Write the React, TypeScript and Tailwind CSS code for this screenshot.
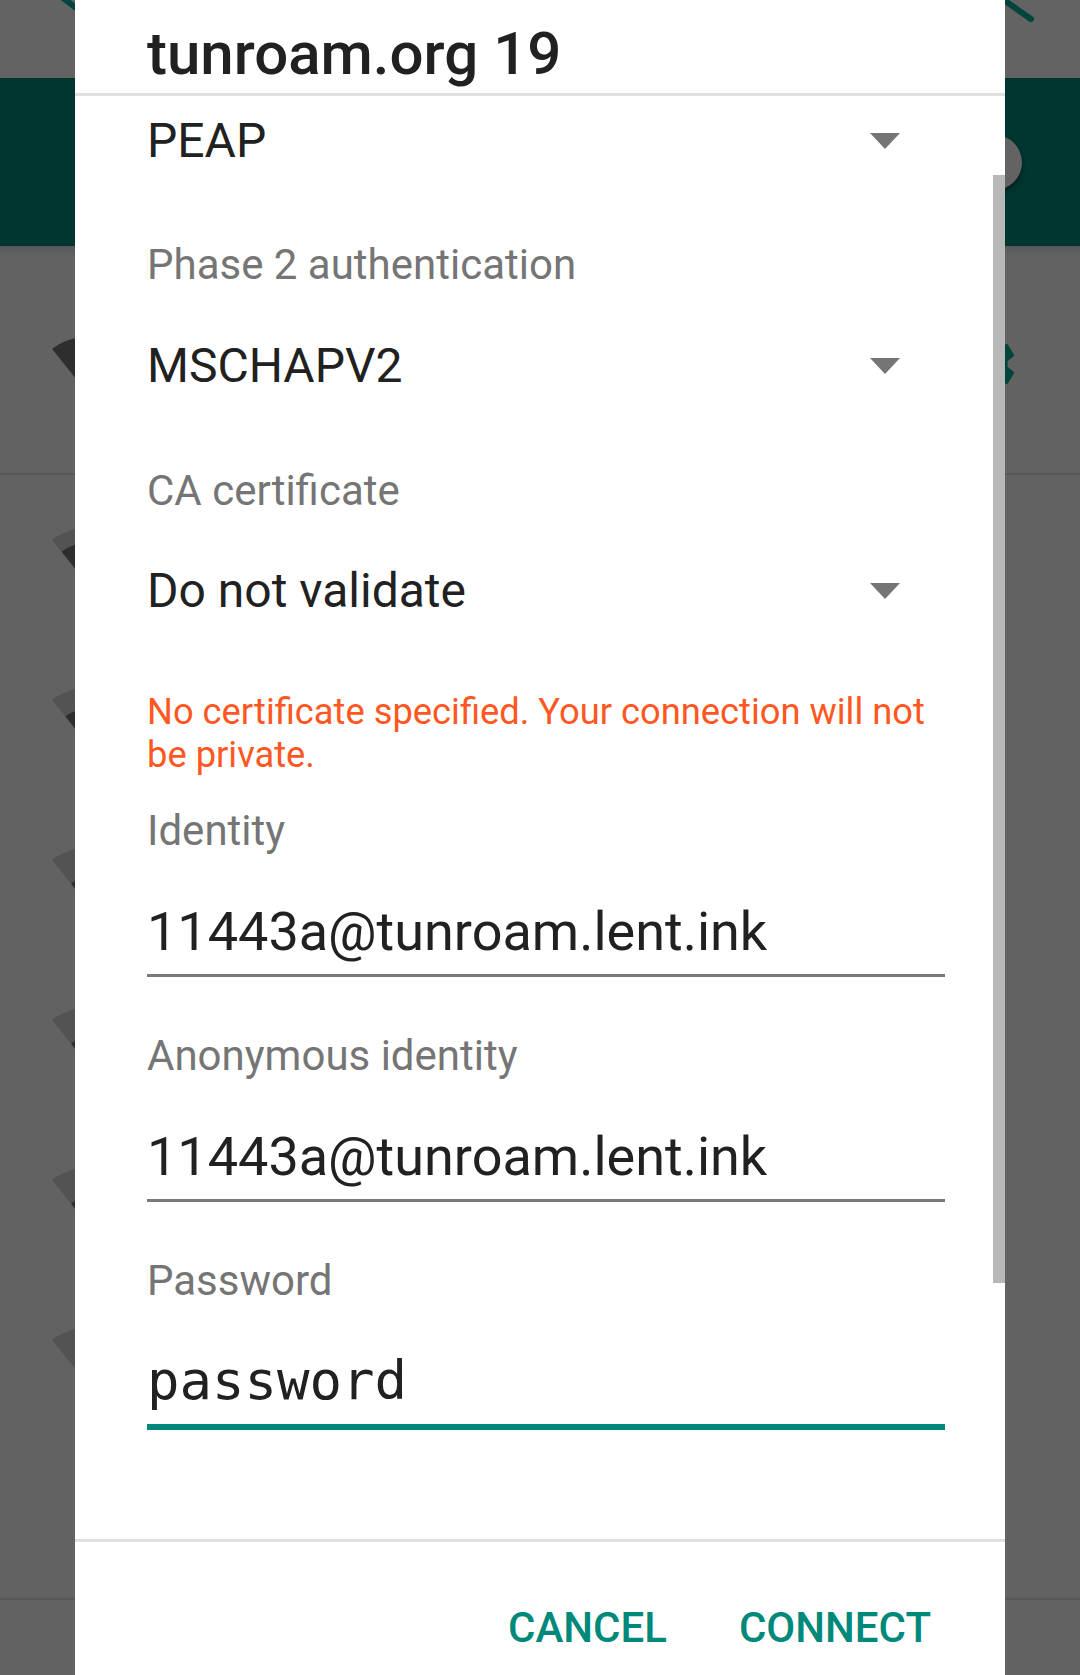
import React from "react";

const FAN =
  "M12.01 21.49L23.64 7c-.45-.34-4.93-4-11.64-4C5.28 3 .81 6.66.36 7l11.63 14.49.01.01.01-.01z";
const BARS: Record<number, string> = {
  4: FAN,
  3: "M3.53 10.95l8.46 10.54.01.01.01-.01 8.46-10.54C20.04 10.62 16.81 8 12 8c-4.81 0-8.04 2.62-8.47 2.95z",
  2: "M4.79 12.52l7.2 8.98H12l.01-.01 7.2-8.98C18.85 12.24 16.1 10 12 10s-6.85 2.24-7.21 2.52z",
  1: "M6.67 14.86L12 21.49v.01l.01-.01 5.33-6.63C17.06 14.65 15.03 13 12 13s-5.06 1.65-5.33 1.86z",
};

function WifiIcon({ level }: { level: number }) {
  return (
    <svg width="72" height="72" viewBox="0 0 24 24" className="shrink-0">
      <path d={FAN} fill="#535353" />
      {level > 0 && <path d={BARS[level]} fill="#2e2e2e" />}
    </svg>
  );
}

function GearIcon() {
  return (
    <svg width="72" height="72" viewBox="0 0 24 24" className="shrink-0">
      <path
        fill="#00443c"
        d="M19.14 12.94c.04-.3.06-.61.06-.94 0-.32-.02-.64-.07-.94l2.03-1.58c.18-.14.23-.41.12-.61l-1.92-3.32c-.12-.22-.37-.29-.59-.22l-2.39.96c-.5-.38-1.03-.7-1.62-.94l-.36-2.54c-.04-.24-.24-.41-.48-.41h-3.84c-.24 0-.43.17-.47.41l-.36 2.54c-.59.24-1.130.57-1.62.94l-2.39-.96c-.22-.08-.47 0-.59.22L2.74 8.87c-.12.21-.08.47.12.61l2.03 1.58c-.05.3-.09.63-.09.94s.02.64.07.94l-2.03 1.58c-.18.14-.23.41-.12.61l1.92 3.32c.12.22.37.29.59.22l2.39-.96c.5.38 1.03.7 1.62.94l.36 2.54c.05.24.24.41.48.41h3.84c.24 0 .44-.17.47-.41l.36-2.54c.59-.24 1.13-.56 1.62-.94l2.39.96c.22.08.47 0 .59-.22l1.92-3.32c.12-.22.07-.47-.12-.61l-2.01-1.58zM12 15.6c-1.98 0-3.6-1.62-3.6-3.6s1.62-3.6 3.6-3.6 3.6 1.62 3.6 3.6-1.62 3.6-3.6 3.6z"
      />
    </svg>
  );
}

function Caret() {
  return (
    <svg width="30" height="16" viewBox="0 0 30 16" className="mr-[45px] shrink-0">
      <polygon points="0,0 30,0 15,16" fill="#757575" />
    </svg>
  );
}

function Spinner({ value, mt }: { value: string; mt: string }) {
  return (
    <div className={`flex h-[56px] items-center justify-between ${mt}`}>
      <span className="text-[48px] leading-[56px] text-[#212121]">{value}</span>
      <Caret />
    </div>
  );
}

function Label({ text, mt }: { text: string; mt: string }) {
  return <div className={`text-[42px] leading-[49px] text-[#757575] ${mt}`}>{text}</div>;
}

const wifiRows = [3, 2, 1, 1, 1, 0];

export default function App() {
  return (
    <div className="relative h-[1675px] w-[1080px] overflow-hidden bg-[#626262] font-['Roboto',sans-serif]">
      {/* dimmed Wi-Fi settings screen behind the dialog */}
      <div className="relative h-[78px] bg-[#636363]">
        <svg className="absolute left-0 top-0" width="80" height="78">
          <line x1="58" y1="-6" x2="76" y2="8" stroke="#00443c" strokeWidth="6" strokeLinecap="round" />
        </svg>
        <svg className="absolute right-0 top-0" width="80" height="78">
          <line x1="-2" y1="-4" x2="31" y2="19" stroke="#00443c" strokeWidth="6" strokeLinecap="round" />
        </svg>
      </div>
      <div className="flex h-[168px] items-center justify-end bg-[#003530] pr-[58px]">
        <div className="h-[55px] w-[55px] rounded-full bg-[#636363] shadow-[0_3px_4px_rgba(0,0,0,0.45)]" />
      </div>
      <div className="h-[9px] bg-gradient-to-b from-[#565656] to-[#626262]" />
      <div className="flex h-[220px] items-center border-b-2 border-[#585858] pl-[51px] pr-[58px]">
        <svg width="72" height="72" viewBox="0 0 24 24" className="shrink-0">
          <path d={FAN} fill="#2e2e2e" />
        </svg>
        <div className="ml-auto">
          <GearIcon />
        </div>
      </div>
      {wifiRows.map((lvl, i) => (
        <div key={i} className="flex h-[160px] items-center pl-[51px]">
          <WifiIcon level={lvl} />
        </div>
      ))}
      <div className="h-[165px] border-b-2 border-[#585858]" />

      {/* dialog */}
      <div className="absolute inset-y-0 left-[75px] w-[930px] bg-white">
        <div className="pl-[72px] pt-[19px]">
          <h1 className="text-[60px] font-medium leading-[70px] text-[#212121]">tunroam.org 19</h1>
        </div>
        <div className="mt-[4px] h-[3px] bg-[#e0e0e0]" />

        <div className="relative h-[1443px] overflow-hidden">
          <div className="absolute right-0 top-[79px] h-[1108px] w-[12px] bg-[#b8b8b8]" />
          <div className="pl-[72px] pr-[60px]">
            <Spinner value="PEAP" mt="mt-[17px]" />
            <Label text="Phase 2 authentication" mt="mt-[71px]" />
            <Spinner value="MSCHAPV2" mt="mt-[49px]" />
            <Label text="CA certificate" mt="mt-[72px]" />
            <Spinner value="Do not validate" mt="mt-[48px]" />
            <p className="mt-[71px] text-[36.3px] leading-[43px] text-[#ff5722]">
              No certificate specified. Your connection will not be private.
            </p>
            <Label text="Identity" mt="mt-[30px]" />
            <div className="mt-[45px] text-[54px] leading-[63px] text-[#212121]">11443a@tunroam.lent.ink</div>
            <div className="mt-[11px] h-[3px] bg-[#7a7a7a]" />
            <Label text="Anonymous identity" mt="mt-[54px]" />
            <div className="mt-[45px] text-[54px] leading-[63px] text-[#212121]">11443a@tunroam.lent.ink</div>
            <div className="mt-[11px] h-[3px] bg-[#7a7a7a]" />
            <Label text="Password" mt="mt-[54px]" />
            <div className="mt-[44px] font-['DejaVu_Sans_Mono',monospace] text-[54px] leading-[63px] text-[#212121]">
              password
            </div>
            <div className="mt-[12px] h-[6px] bg-[#00897b]" />
          </div>
        </div>

        <div className="h-[3px] bg-[#e0e0e0]" />
        <div className="mt-[61px] flex justify-end gap-[72px] pr-[74px] text-[42px] font-medium leading-[49px] text-[#00897b]">
          <span>CANCEL</span>
          <span>CONNECT</span>
        </div>
      </div>
    </div>
  );
}
